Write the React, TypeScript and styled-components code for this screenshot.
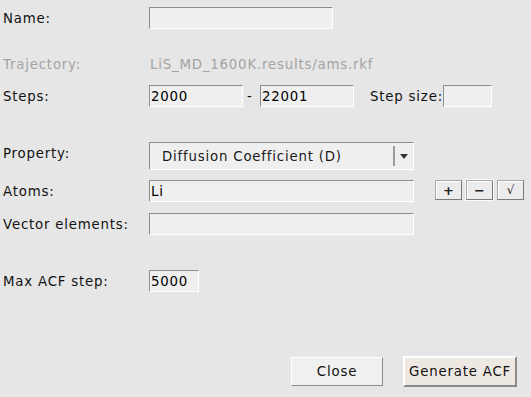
import React, { ReactElement } from "react";
import styled, { createGlobalStyle } from "styled-components";

const GlobalStyle = createGlobalStyle`
	html, body {
		margin: 0;
		padding: 0;
		background: #e6e6e6;
	}
	body {
		font-family: "DejaVu Sans", "Liberation Sans", sans-serif;
		font-size: 13.33px;
		letter-spacing: 0.8px;
		color: #111;
	}
`;

const Window = styled.div`
	width: 531px;
	height: 397px;
	box-sizing: border-box;
	padding: 7px 0 0 3px;
	background: #e6e6e6;
	display: flex;
	flex-direction: column;
	overflow: hidden;
`;

const Row = styled.div<{ $top?: number; $h: number }>`
	display: flex;
	align-items: center;
	height: ${(p) => p.$h}px;
	margin-top: ${(p) => p.$top ?? 0}px;
`;

const Label = styled.div<{ $muted?: boolean; $lift?: number }>`
	width: 146px;
	flex: none;
	white-space: nowrap;
	color: ${(p) => (p.$muted ? "#a3a3a3" : "#111")};
	margin-bottom: ${(p) => p.$lift ?? 0}px;
`;

const PathText = styled.div`
	color: #a3a3a3;
	padding-left: 1px;
	white-space: nowrap;
`;

const Entry = styled.div<{ $w: number }>`
	width: ${(p) => p.$w}px;
	height: 22px;
	box-sizing: border-box;
	flex: none;
	background: #efefef;
	border-top: 1px solid #8e8e8e;
	border-left: 1px solid #8e8e8e;
	border-right: 1px solid #ffffff;
	border-bottom: 1px solid #ffffff;
	padding-left: 1px;
	display: flex;
	align-items: center;
	color: #000;
	white-space: nowrap;
	overflow: hidden;
`;

const Dash = styled.span`
	width: 17px;
	flex: none;
	padding-left: 4px;
	box-sizing: border-box;
`;

const StepLabel = styled.span`
	margin-left: 16px;
	width: 73px;
	flex: none;
	white-space: nowrap;
`;

const Combo = styled.div`
	width: 265px;
	height: 28px;
	box-sizing: border-box;
	background: #efefef;
	border-top: 1px solid #8e8e8e;
	border-left: 1px solid #8e8e8e;
	border-right: 1px solid #ffffff;
	border-bottom: 1px solid #ffffff;
	display: flex;
	align-items: center;
`;

const ComboText = styled.div`
	flex: 1;
	padding-left: 12px;
	color: #1a1a1a;
	white-space: nowrap;
`;

const ComboArrow = styled.div`
	width: 17px;
	height: 20px;
	margin-right: 1px;
	border-left: 2px solid #9a9a9a;
	display: flex;
	align-items: center;
	justify-content: center;
`;

const Tools = styled.div`
	display: flex;
	gap: 4px;
	margin-left: 21px;
	align-self: flex-start;
`;

const ToolButton = styled.button<{ $focus?: boolean; $thin?: boolean }>`
	width: 27px;
	height: 20px;
	box-sizing: border-box;
	padding: 0;
	margin: 0;
	background: #ececec;
	border: 1px solid #a8a8a8;
	border-bottom-color: #7a7a7a;
	border-right-color: #7a7a7a;
	box-shadow: ${(p) =>
		p.$focus ? "0 0 0 1px #fafafa, inset 1px 1px 0 #ffffff" : "inset 1px 1px 0 #ffffff"};
	font-family: "DejaVu Sans", sans-serif;
	font-size: ${(p) => (p.$thin ? 12 : 13)}px;
	font-weight: ${(p) => (p.$thin ? "normal" : "bold")};
	color: #222;
	display: flex;
	align-items: center;
	justify-content: center;
	line-height: 1;
`;

const Footer = styled.div`
	display: flex;
	align-items: center;
	margin-top: 64px;
	padding-left: 288px;
	gap: 20px;
	height: 31px;
`;

const Button = styled.button<{ $primary?: boolean }>`
	box-sizing: border-box;
	margin: 0;
	padding: 0;
	font-family: "DejaVu Sans", "Liberation Sans", sans-serif;
	font-size: 13.33px;
	letter-spacing: 0.8px;
	color: #111;
	width: ${(p) => (p.$primary ? 114 : 92)}px;
	height: ${(p) => (p.$primary ? 31 : 29)}px;
	background: ${(p) => (p.$primary ? "#ede9e2" : "#f0f0f0")};
	border: ${(p) => (p.$primary ? 2 : 1)}px solid #ffffff;
	border-right-color: #8a8a8a;
	border-bottom-color: #8a8a8a;
`;

function Arrow(): ReactElement {
	return (
		<svg width="8" height="5" viewBox="0 0 8 5">
			<path d="M0 0H8L4 5Z" fill="#333" />
		</svg>
	);
}

export default function App(): ReactElement {
	return (
		<>
			<GlobalStyle />
			<Window>
				<Row $h={22}>
					<Label>Name:</Label>
					<Entry $w={184} />
				</Row>
				<Row $top={24} $h={22}>
					<Label $muted>Trajectory:</Label>
					<PathText>LiS_MD_1600K.results/ams.rkf</PathText>
				</Row>
				<Row $top={10} $h={22}>
					<Label>Steps:</Label>
					<Entry $w={94}>2000</Entry>
					<Dash>-</Dash>
					<Entry $w={94}>22001</Entry>
					<StepLabel>Step size:</StepLabel>
					<Entry $w={49} />
				</Row>
				<Row $top={35} $h={28}>
					<Label $lift={6}>Property:</Label>
					<Combo>
						<ComboText>Diffusion Coefficient (D)</ComboText>
						<ComboArrow>
							<Arrow />
						</ComboArrow>
					</Combo>
				</Row>
				<Row $top={10} $h={22}>
					<Label>Atoms:</Label>
					<Entry $w={265}>Li</Entry>
					<Tools>
						<ToolButton>+</ToolButton>
						<ToolButton $focus>−</ToolButton>
						<ToolButton $thin>√</ToolButton>
					</Tools>
				</Row>
				<Row $top={11} $h={22}>
					<Label>Vector elements:</Label>
					<Entry $w={265} />
				</Row>
				<Row $top={35} $h={22}>
					<Label>Max ACF step:</Label>
					<Entry $w={50}>5000</Entry>
				</Row>
				<Footer>
					<Button>Close</Button>
					<Button $primary>Generate ACF</Button>
				</Footer>
			</Window>
		</>
	);
}
